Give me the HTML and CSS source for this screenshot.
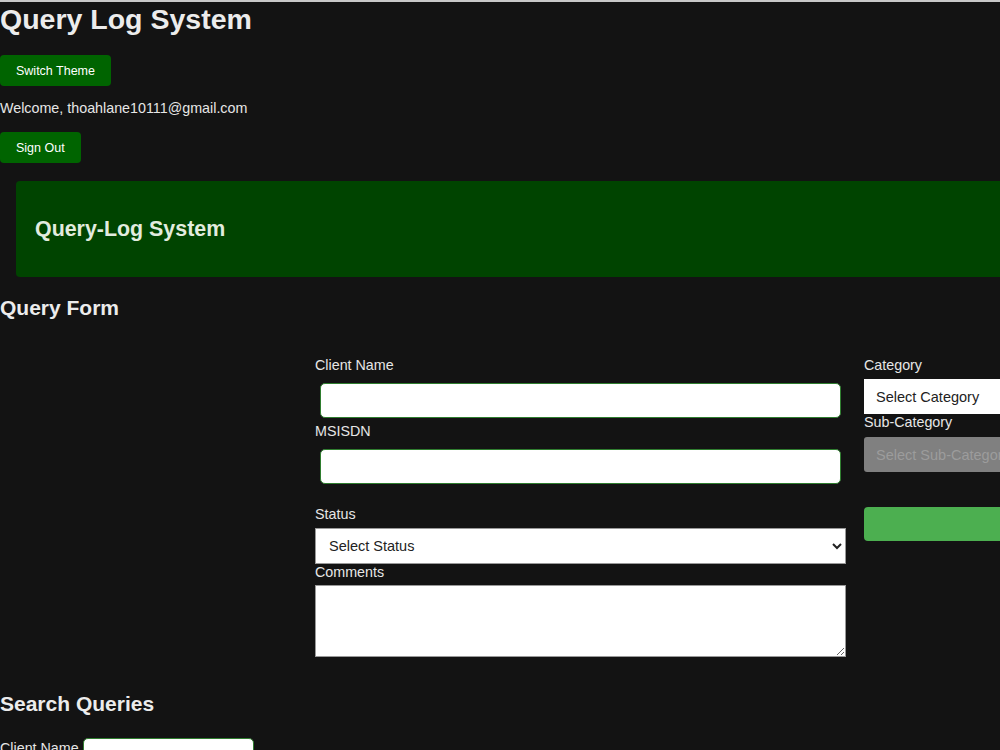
FILE: index.html
```html
<!DOCTYPE html>
<html lang="en">
<head>
<meta charset="UTF-8">
<meta name="viewport" content="width=device-width, initial-scale=1.0">
<title>Query Log System</title>
<link rel="stylesheet" href="styles.css">
</head>
<body>
<div class="top">
  <h1>Query Log System</h1>
  <button class="btn-dark">Switch Theme</button>
  <p class="welcome">Welcome, thoahlane10111@gmail.com</p>
  <button class="btn-dark">Sign Out</button>
</div>
<header class="banner">
  <h2>Query-Log System</h2>
</header>
<h3 class="section-title">Query Form</h3>
<form class="query-form">
  <div class="col-main">
    <label for="clientName">Client Name</label>
    <input type="text" id="clientName" class="text-input">
    <label for="msisdn">MSISDN</label>
    <input type="text" id="msisdn" class="text-input">
    <label for="status" class="lbl-status">Status</label>
    <select id="status" class="select-input">
      <option>Select Status</option>
    </select>
    <label for="comments">Comments</label>
    <textarea id="comments"></textarea>
  </div>
  <div class="col-side">
    <label for="category">Category</label>
    <select id="category" class="select-input select-plain">
      <option>Select Category</option>
    </select>
    <label for="subCategory">Sub-Category</label>
    <select id="subCategory" class="select-input select-plain" disabled>
      <option>Select Sub-Category</option>
    </select>
    <button type="button" class="btn-submit"></button>
  </div>
</form>
<h3 class="section-title search-title">Search Queries</h3>
<div class="search-row">
  <label for="searchName">Client Name</label>
  <input type="text" id="searchName" class="text-input search-input">
</div>
</body>
</html>
```

FILE: styles.css
```css
html {
  background-color: #131313;
}
body {
  font-family: "Liberation Sans", Arial, sans-serif;
  margin: 0;
  padding: 0;
  background-color: #131313;
  color: #e6e6e6;
  border-top: 2px solid #c8c8c8;
  overflow: hidden;
  height: 748px;
}
h1 {
  font-size: 28.5px;
  margin: 0;
  line-height: 34px;
  color: #ececec;
}
.btn-dark {
  display: block;
  background-color: #006400;
  color: #fff;
  border: none;
  border-radius: 4px;
  font-family: "Liberation Sans", Arial, sans-serif;
  font-size: 12.5px;
  height: 31px;
  padding: 0 16px;
}
.top h1 + .btn-dark {
  margin-top: 19px;
}
.welcome {
  font-size: 14.3px;
  line-height: 16px;
  margin: 14px 0 16px;
}
.banner {
  margin: 18px 0 0 16px;
  width: 1100px;
  height: 96px;
  background-color: #004400;
  border-radius: 4px;
  display: flex;
  align-items: center;
  padding-left: 19px;
  box-sizing: border-box;
}
.banner h2 {
  font-size: 21.4px;
  margin: 0;
  color: #e2ecdf;
}
.section-title {
  font-size: 21px;
  margin: 0;
  line-height: 24px;
  padding-top: 19px;
  color: #ececec;
}
.query-form {
  display: flex;
  gap: 18px;
  margin: 37px 0 0 315px;
  width: 900px;
}
.col-main {
  display: flex;
  flex-direction: column;
  width: 531px;
}
.col-side {
  display: flex;
  flex-direction: column;
  width: 200px;
}
label {
  font-size: 14.3px;
  line-height: 16px;
}
.text-input {
  box-sizing: border-box;
  height: 35px;
  margin: 10px 5px 5px;
  border: 1px solid #2f7d2f;
  border-radius: 5px;
  background: #fff;
}
.col-main .lbl-status {
  margin-top: 17px;
}
.select-input {
  box-sizing: border-box;
  height: 36px;
  margin-top: 6px;
  border: 1px solid #999;
  border-radius: 0;
  background: #fff;
  color: #222;
  font-family: "Liberation Sans", Arial, sans-serif;
  font-size: 14.5px;
  padding-left: 9px;
}
.select-plain {
  appearance: none;
  height: 35px;
  border: none;
  padding-left: 12px;
}
.select-plain:disabled {
  background: #808080;
  color: #9c9c9c;
  opacity: 1;
  border-radius: 3px;
  margin-top: 7px;
}
textarea {
  box-sizing: border-box;
  height: 72px;
  margin-top: 5px;
  border: 1px solid #999;
  background: #fff;
  resize: vertical;
}
.btn-submit {
  margin-top: 35px;
  height: 34px;
  background-color: #4caf50;
  border: none;
  border-radius: 4px;
}
.search-title {
  padding-top: 35px;
}
.search-row {
  display: flex;
  align-items: flex-start;
  gap: 4px;
  margin-top: 22px;
}
.search-row label {
  width: 79px;
  white-space: nowrap;
  padding-top: 2px;
}
.search-input {
  width: 171px;
  margin: 0;
}
```
